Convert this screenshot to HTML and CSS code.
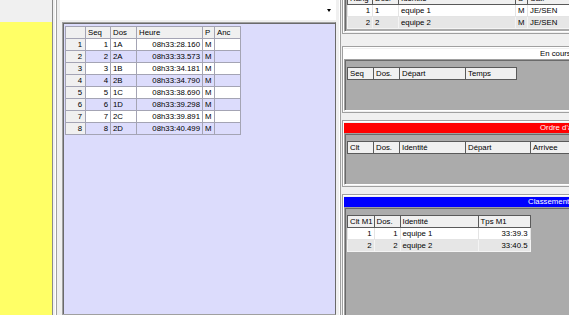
FILE: index.html
```html
<!DOCTYPE html>
<html>
<head>
<meta charset="utf-8">
<link rel="stylesheet" href="styles.css">
</head>
<body>
<div class="app">
  <div class="left">
    <div class="left-top"></div>
    <div class="yellow"></div>
  </div>
  <div class="split"></div>
  <div class="mid">
    <div class="combo"><span class="arrow"></span></div>
    <div class="lav">
      <table class="grid">
        <colgroup><col class="c-rh"><col class="c-seq"><col class="c-dos"><col class="c-heure"><col class="c-p"><col class="c-anc"></colgroup>
        <tr class="hd"><td></td><td>Seq</td><td>Dos</td><td>Heure</td><td>P</td><td>Anc</td></tr>
        <tr><td class="rh">1</td><td class="r">1</td><td>1A</td><td class="r">08h33:28.160</td><td>M</td><td></td></tr>
        <tr class="alt"><td class="rh">2</td><td class="r">2</td><td>2A</td><td class="r">08h33:33.573</td><td>M</td><td></td></tr>
        <tr><td class="rh">3</td><td class="r">3</td><td>1B</td><td class="r">08h33:34.181</td><td>M</td><td></td></tr>
        <tr class="alt"><td class="rh">4</td><td class="r">4</td><td>2B</td><td class="r">08h33:34.790</td><td>M</td><td></td></tr>
        <tr><td class="rh">5</td><td class="r">5</td><td>1C</td><td class="r">08h33:38.690</td><td>M</td><td></td></tr>
        <tr class="alt"><td class="rh">6</td><td class="r">6</td><td>1D</td><td class="r">08h33:39.298</td><td>M</td><td></td></tr>
        <tr><td class="rh">7</td><td class="r">7</td><td>2C</td><td class="r">08h33:39.891</td><td>M</td><td></td></tr>
        <tr class="alt"><td class="rh">8</td><td class="r">8</td><td>2D</td><td class="r">08h33:40.499</td><td>M</td><td></td></tr>
      </table>
    </div>
  </div>
  <div class="split2"></div>
  <div class="right">
    <div class="rp p1">
      <div class="body b1">
        <table class="lv">
          <colgroup><col style="width:25px"><col style="width:26px"><col style="width:117px"><col style="width:12px"><col style="width:67px"></colgroup>
          <tr class="lh"><td>Rang</td><td>Dos.</td><td>Identite</td><td>S</td><td>Cat.</td></tr>
          <tr><td class="r">1</td><td>1</td><td>equipe 1</td><td>M</td><td>JE/SEN</td></tr>
          <tr class="g"><td class="r">2</td><td>2</td><td>equipe 2</td><td>M</td><td>JE/SEN</td></tr>
        </table>
      </div>
    </div>
    <div class="rp">
      <div class="tb tb-white">En cours</div>
      <div class="body">
        <table class="lv">
          <colgroup><col style="width:26px"><col style="width:26px"><col style="width:66px"><col style="width:51px"></colgroup>
          <tr class="lh"><td>Seq</td><td>Dos.</td><td>Départ</td><td>Temps</td></tr>
        </table>
      </div>
    </div>
    <div class="rp">
      <div class="tb tb-red">Ordre d'arrivée</div>
      <div class="body">
        <table class="lv">
          <colgroup><col style="width:26px"><col style="width:26px"><col style="width:66px"><col style="width:65px"><col style="width:65px"></colgroup>
          <tr class="lh"><td>Clt</td><td>Dos.</td><td>Identité</td><td>Départ</td><td>Arrivee</td></tr>
        </table>
      </div>
    </div>
    <div class="rp p4">
      <div class="tb tb-blue">Classement M1</div>
      <div class="body b4">
        <table class="lv">
          <colgroup><col style="width:26px"><col style="width:26px"><col style="width:78px"><col style="width:52px"></colgroup>
          <tr class="lh"><td>Clt M1</td><td>Dos.</td><td>Identité</td><td>Tps M1</td></tr>
          <tr><td class="r">1</td><td class="r">1</td><td>equipe 1</td><td class="r">33:39.3</td></tr>
          <tr class="g"><td class="r">2</td><td class="r">2</td><td>equipe 2</td><td class="r">33:40.5</td></tr>
        </table>
      </div>
    </div>
  </div>
</div>
</body>
</html>
```
FILE: styles.css
```css
html, body { margin: 0; padding: 0; }
body {
  background: #f0f0f0;
  font-family: "Liberation Sans", Arial, sans-serif;
  font-size: 7.8px;
  color: #000;
  overflow: hidden;
}
.app { display: flex; width: 569px; height: 315px; overflow: hidden; }

.left { width: 52px; display: flex; flex-direction: column; border-right: 1px solid #8a8a8a; }
.left-top { height: 22px; }
.yellow { flex: 1; background: #ffff66; }

.split {
  width: 7px;
  background: linear-gradient(to right, #f0f0f0 0 2px, #ffffff 2px 3px, #a0a0a0 3px 4px, #f0f0f0 4px 7px);
}

.mid { width: 276px; display: flex; flex-direction: column; }
.combo {
  height: 20px;
  background: #fff;
  display: flex;
  justify-content: flex-end;
  align-items: center;
  padding-right: 5px;
}
.arrow {
  width: 0; height: 0;
  border-left: 2.5px solid transparent;
  border-right: 2.5px solid transparent;
  border-top: 3px solid #000;
}
.lav {
  flex: 1;
  margin: 2px 0 0 2px;
  background: #dcdcfc;
  border: 1px solid #a0a0a0;
  border-right-color: #6a6a6a;
  box-shadow: inset 1px 1px 0 #6a6a6a;
  padding: 3px 0 0 2px;
}
.grid {
  border-collapse: collapse;
  table-layout: fixed;
}
.grid td {
  border: 1px solid #a4a4b4;
  height: 11px;
  line-height: 11px;
  padding: 0 1px 0 2px;
  white-space: nowrap;
  overflow: hidden;
  background: #fff;
}
.grid .c-rh { width: 20px; }
.grid .c-seq { width: 25px; }
.grid .c-dos { width: 26px; }
.grid .c-heure { width: 66px; }
.grid .c-p { width: 12px; }
.grid .c-anc { width: 26px; }
.grid .hd td { background: #f0f0f0; }
.grid .alt td { background: #dcdcfc; }
.grid td.rh { background: #f0f0f0; text-align: right; padding-right: 3px; }
.grid td.r { text-align: right; padding-right: 2px; }

.split2 {
  width: 6px;
  background: linear-gradient(to right, #f0f0f0 0 3px, #ffffff 3px 4px, #a0a0a0 4px 5px, #f0f0f0 5px 6px);
}

.right { width: 227px; overflow: hidden; }
.rp {
  width: 300px;
  height: 67px;
  box-sizing: border-box;
  border: 1px solid #a0a0a0;
  box-shadow: inset 1px 1px 0 #ffffff;
  padding: 2px 1px 1px 1px;
  margin-top: 7px;
  display: flex;
  flex-direction: column;
}
.p1 { margin-top: -18px; height: 52px; }
.p1 + .rp { margin-top: 12px; }
.p4 { height: 140px; }
.tb {
  height: 10px;
  line-height: 10px;
  white-space: nowrap;
  overflow: hidden;
  padding-left: 196px;
}
.tb-white { background: #fff; color: #000; }
.tb-red { background: #ff0000; color: #fff; }
.tb-blue { background: #0000ff; color: #fff; padding-left: 184px; }
.body {
  flex: 1;
  background: #ababab;
  border: 1px solid #a0a0a0;
  border-right-color: #fff;
  border-bottom-color: #fff;
  box-shadow: inset 1px 1px 0 #6a6a6a;
  padding: 7px 0 0 2px;
}
.b1 { padding-top: 6px; }
.lv {
  border-collapse: collapse;
  table-layout: fixed;
}
.lv td {
  height: 11px;
  line-height: 11px;
  padding: 0 1px 0 2px;
  white-space: nowrap;
  overflow: hidden;
  background: #fff;
  border: 1px solid #e4e4e4;
}
.lv tr.g td { background: #e6e6e6; border-color: #f4f4f4; }
.lv .lh td { background: #f0f0f0; border: 1px solid #5a5a5a; }
.lv td.r { text-align: right; padding-right: 2px; }
```
